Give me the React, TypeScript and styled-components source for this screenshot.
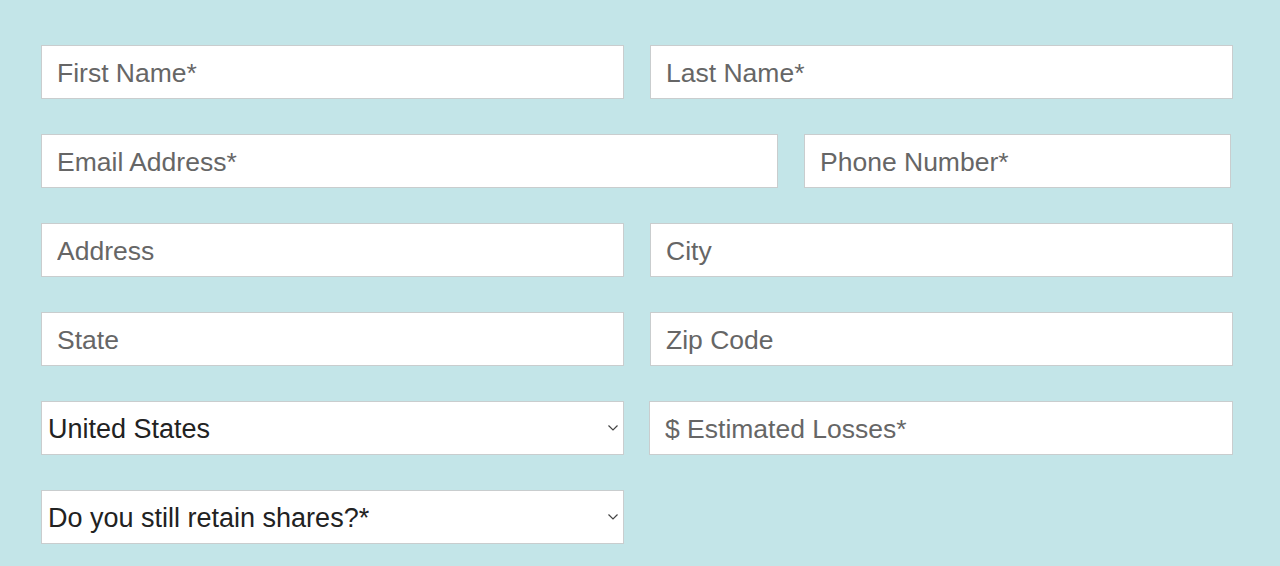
import styled, { createGlobalStyle } from "styled-components";

const GlobalStyle = createGlobalStyle`
  html, body {
    margin: 0;
    padding: 0;
    background: #c3e5e8;
  }
  body {
    font-family: "Liberation Sans", Arial, sans-serif;
  }
`;

const Form = styled.form`
  display: flex;
  flex-direction: column;
  gap: 35px;
  padding: 45px 47px 20px 41px;
  min-height: 566px;
  box-sizing: border-box;
`;

const Row = styled.div<{ $gap?: number }>`
  display: flex;
  gap: ${(p) => p.$gap ?? 26}px;
`;

const Field = styled.input<{ $w?: number }>`
  flex: ${(p) => (p.$w ? `0 0 ${p.$w}px` : "1 1 0")};
  width: 0;
  min-width: 0;
  height: 54px;
  box-sizing: border-box;
  border: 1px solid #c9cdce;
  background: #fff;
  padding: 2px 15px 0;
  font-family: "Liberation Sans", Arial, sans-serif;
  font-size: 26.5px;
  color: #333;
  outline: none;

  &::placeholder {
    color: #666;
  }
`;

const SelectWrap = styled.div`
  position: relative;
  flex: 0 0 583px;
  height: 54px;
`;

const Select = styled.select`
  width: 100%;
  height: 100%;
  box-sizing: border-box;
  appearance: none;
  border: 1px solid #c9cdce;
  border-radius: 0;
  background: #fff;
  padding: 2px 30px 0 6px;
  font-family: "Liberation Sans", Arial, sans-serif;
  font-size: 27px;
  color: #222;
  outline: none;
`;

const Chevron = styled.svg`
  position: absolute;
  right: 5px;
  top: 50%;
  transform: translateY(-50%);
  pointer-events: none;
`;

function Dropdown({ options }: { options: string[] }) {
  return (
    <SelectWrap>
      <Select defaultValue={options[0]}>
        {options.map((o) => (
          <option key={o}>{o}</option>
        ))}
      </Select>
      <Chevron width="12" height="8" viewBox="0 0 12 8">
        <path d="M1.5 1.5 L6 6 L10.5 1.5" fill="none" stroke="#444" strokeWidth="1.2" />
      </Chevron>
    </SelectWrap>
  );
}

export default function App() {
  return (
    <>
      <GlobalStyle />
      <Form>
        <Row>
          <Field placeholder="First Name*" />
          <Field placeholder="Last Name*" />
        </Row>
        <Row>
          <Field $w={737} placeholder="Email Address*" />
          <Field $w={427} placeholder="Phone Number*" />
        </Row>
        <Row>
          <Field placeholder="Address" />
          <Field placeholder="City" />
        </Row>
        <Row>
          <Field placeholder="State" />
          <Field placeholder="Zip Code" />
        </Row>
        <Row $gap={25}>
          <Dropdown options={["United States", "Canada", "Other"]} />
          <Field placeholder="$ Estimated Losses*" />
        </Row>
        <Row>
          <Dropdown options={["Do you still retain shares?*", "Yes", "No"]} />
        </Row>
      </Form>
    </>
  );
}
